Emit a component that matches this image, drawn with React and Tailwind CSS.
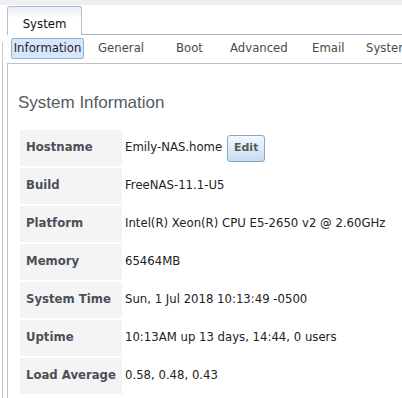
export default function App() {
  const rows = [
    { label: "Hostname", value: "Emily-NAS.home", edit: true },
    { label: "Build", value: "FreeNAS-11.1-U5" },
    { label: "Platform", value: "Intel(R) Xeon(R) CPU E5-2650 v2 @ 2.60GHz" },
    { label: "Memory", value: "65464MB" },
    { label: "System Time", value: "Sun, 1 Jul 2018 10:13:49 -0500" },
    { label: "Uptime", value: "10:13AM up 13 days, 14:44, 0 users" },
    { label: "Load Average", value: "0.58, 0.48, 0.43" },
  ];

  const subtabs = [
    { name: "General", w: "w-[78px] ml-[11px]" },
    { name: "Boot", w: "w-[54px]" },
    { name: "Advanced", w: "w-[82px]" },
    { name: "Email", w: "w-[54px]" },
    { name: "System Dataset", w: "w-[120px]" },
  ];

  return (
    <div className="w-[402px] h-[398px] bg-white overflow-hidden font-['DejaVu_Sans',sans-serif] text-[11.7px]">
      {/* TOP STRIP */}
      <div className="h-[5px] bg-[#efefef]" />

      {/* MAIN TAB */}
      <div className="flex h-[29px] mt-[1px]">
        <div className="w-[7px]" />
        <div className="w-[75px] h-[29px] border border-b-0 border-[#b3bccb] rounded-t-[3px] bg-gradient-to-b from-[#e6eef8] to-white to-40% flex justify-center pt-[9px] text-[#111]">
          System
        </div>
        <div className="flex-1 border-b border-[#a9b3c4]" />
      </div>

      {/* BODY */}
      <div className="flex h-[363px]">
        <div className="w-[2px]" />
        <div className="w-px bg-[#c9c9c9] mt-[7px]" />
        <div className="flex-1 flex flex-col min-w-0 overflow-hidden">
          {/* SUBTABS */}
          <div className="flex items-center pt-[3px] pl-[8px] whitespace-nowrap">
            <div className="w-[73px] shrink-0 h-[21px] flex items-center justify-center border border-[#8fb4da] rounded-[2px] bg-[#d8e7f7] text-[#1c1c3c]">
              Information
            </div>
            {subtabs.map((t) => (
              <div key={t.name} className={`${t.w} shrink-0 px-[3px] text-[#4a4a4a]`}>
                {t.name}
              </div>
            ))}
          </div>

          {/* PANEL */}
          <div className="flex-1 mt-[4px] ml-[4px] border-l border-t border-[#bcc2cc] pl-[10px] pt-[29px]">
            <h1 className="font-['Liberation_Sans',sans-serif] text-[17px] leading-[20px] text-[#535b66]">
              System Information
            </h1>

            <div className="grid grid-cols-[102px_1fr] gap-[2px] ml-[2px] mt-[17px]">
              {rows.map((r) => (
                <div key={r.label} className="contents">
                  <div className="h-[36px] bg-[#f4f4f4] flex items-center pl-[6px] font-bold text-[#4b4f57] whitespace-nowrap">
                    {r.label}
                  </div>
                  <div className="h-[36px] flex items-center pl-[1px] text-[#222] whitespace-nowrap">
                    {r.value}
                    {r.edit && (
                      <button className="ml-[5px] w-[38px] h-[27px] border border-[#86a6c8] rounded-[3px] bg-gradient-to-b from-[#f3f8fd] to-[#c6dbf2] font-bold text-[11px] text-[#5a5a5a]">
                        Edit
                      </button>
                    )}
                  </div>
                </div>
              ))}
            </div>
          </div>
        </div>
      </div>
    </div>
  );
}
